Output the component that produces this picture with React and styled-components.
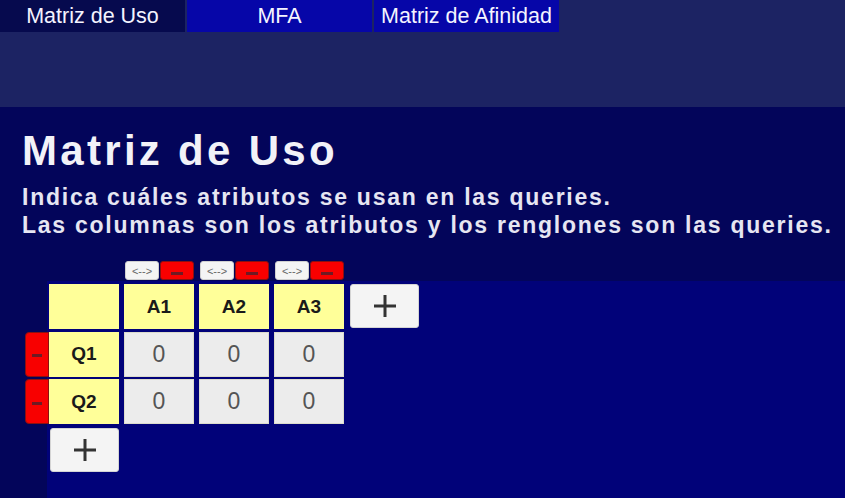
import React from "react";
import styled, { createGlobalStyle } from "styled-components";

const GlobalStyle = createGlobalStyle`
  html, body {
    margin: 0;
    padding: 0;
    background: #03055a;
    font-family: "Liberation Sans", Arial, sans-serif;
  }
  * { box-sizing: border-box; }
`;

const tabs = ["Matriz de Uso", "MFA", "Matriz de Afinidad"];
const attributes = ["A1", "A2", "A3"];
const queries = [
  { name: "Q1", values: [0, 0, 0] },
  { name: "Q2", values: [0, 0, 0] },
];

// grid shared by the column toolbar and the matrix itself
const COLUMNS = "24px 75px 75px 75px 75px 70px";

const Page = styled.div`
  min-height: 100vh;
  display: flex;
  flex-direction: column;
`;

const TopBar = styled.div`
  height: 107px;
  background: #1c2363;
`;

const TabList = styled.nav`
  display: flex;
  gap: 2px;
`;

const Tab = styled.div`
  width: 185px;
  height: 32px;
  display: flex;
  align-items: center;
  justify-content: center;
  font-size: 21.5px;
  color: #f4f4ff;
  background: ${(p) => (p.$active ? "#060a4e" : "#0606a8")};
`;

const Header = styled.header`
  background: #03055a;
  padding: 20px 0 0;
`;

const Title = styled.h1`
  margin: 0 0 0 22px;
  font-size: 42px;
  font-weight: bold;
  letter-spacing: 3.3px;
  color: #f2f2f8;
`;

const Subtitle = styled.p`
  margin: 8px 0 0 22px;
  font-size: 23px;
  line-height: 28px;
  font-weight: bold;
  letter-spacing: 1.75px;
  color: #e6e6f2;
`;

const ColumnTools = styled.div`
  display: grid;
  grid-template-columns: ${COLUMNS};
  padding-left: 25px;
  margin-top: 22px;
  height: 20px;
`;

const ToolPair = styled.div`
  display: flex;
  gap: 1px;
  padding-left: 1px;
  height: 19px;
`;

const SmallButton = styled.button`
  width: 34px;
  height: 19px;
  padding: 0;
  border-radius: 3px;
  font-family: "Liberation Sans", Arial, sans-serif;
  font-size: 11px;
  color: #666;
  display: flex;
  align-items: center;
  justify-content: center;
  background: ${(p) => (p.$danger ? "#f80000" : "#f4f4f4")};
  border: 1px solid ${(p) => (p.$danger ? "#8a1010" : "#d0d0d0")};
`;

const MinusMark = styled.span`
  display: block;
  width: ${(p) => p.$w || 12}px;
  height: 3px;
  background: #6e1a24;
  margin-top: ${(p) => p.$offset || 0}px;
`;

const Board = styled.main`
  flex: 1;
  margin-left: 47px;
  background: #010279;
  padding-top: 3px;
`;

const Matrix = styled.div`
  display: grid;
  grid-template-columns: ${COLUMNS};
  grid-auto-rows: 45px;
  row-gap: 2.5px;
  margin-left: -22px;
`;

const RowDelete = styled.button`
  width: 24px;
  height: 45px;
  padding: 0;
  display: flex;
  align-items: center;
  justify-content: center;
  background: #f80000;
  border: 1px solid #8a1010;
  border-radius: 4px 0 0 4px;
`;

const LabelCell = styled.div`
  width: 70px;
  display: flex;
  align-items: center;
  justify-content: center;
  background: #ffff99;
  font-size: 19px;
  font-weight: bold;
  color: #1a1a1a;
`;

const ValueCell = styled.div`
  width: 70px;
  display: flex;
  align-items: center;
  justify-content: center;
  background: #ececec;
  border: 1px solid #dcdccc;
  font-size: 23px;
  color: #555;
`;

const AddButton = styled.button`
  width: 69px;
  height: 44px;
  padding: 0;
  display: flex;
  align-items: center;
  justify-content: center;
  background: #f4f4f4;
  border: 1px solid #d4d4d4;
  border-radius: 3px;
  margin-left: ${(p) => p.$shift || 0}px;
  margin-top: ${(p) => p.$down || 0}px;
`;

const Spacer = styled.div``;

function PlusIcon() {
  return (
    <svg width="26" height="26" viewBox="0 0 26 26">
      <path d="M13 2v22M2 13h22" stroke="#333" strokeWidth="3" />
    </svg>
  );
}

export default function App() {
  return (
    <Page>
      <GlobalStyle />
      <TopBar>
        <TabList>
          {tabs.map((t, i) => (
            <Tab key={t} $active={i === 0}>
              {t}
            </Tab>
          ))}
        </TabList>
      </TopBar>

      <Header>
        <Title>Matriz de Uso</Title>
        <Subtitle>
          Indica cuáles atributos se usan en las queries.
          <br />
          Las columnas son los atributos y los renglones son las queries.
        </Subtitle>
        <ColumnTools>
          <Spacer />
          <Spacer />
          {attributes.map((a) => (
            <ToolPair key={a}>
              <SmallButton>{"<-->"}</SmallButton>
              <SmallButton $danger>
                <MinusMark $offset={5} />
              </SmallButton>
            </ToolPair>
          ))}
        </ColumnTools>
      </Header>

      <Board>
        <Matrix>
          <Spacer />
          <LabelCell />
          {attributes.map((a) => (
            <LabelCell key={a}>{a}</LabelCell>
          ))}
          <AddButton $shift={1}>
            <PlusIcon />
          </AddButton>

          {queries.map((q) => (
            <React.Fragment key={q.name}>
              <RowDelete>
                <MinusMark $w={10} $offset={3} />
              </RowDelete>
              <LabelCell>{q.name}</LabelCell>
              {q.values.map((v, i) => (
                <ValueCell key={i}>{v}</ValueCell>
              ))}
              <Spacer />
            </React.Fragment>
          ))}

          <Spacer />
          <AddButton $shift={1} $down={1.5}>
            <PlusIcon />
          </AddButton>
        </Matrix>
      </Board>
    </Page>
  );
}
